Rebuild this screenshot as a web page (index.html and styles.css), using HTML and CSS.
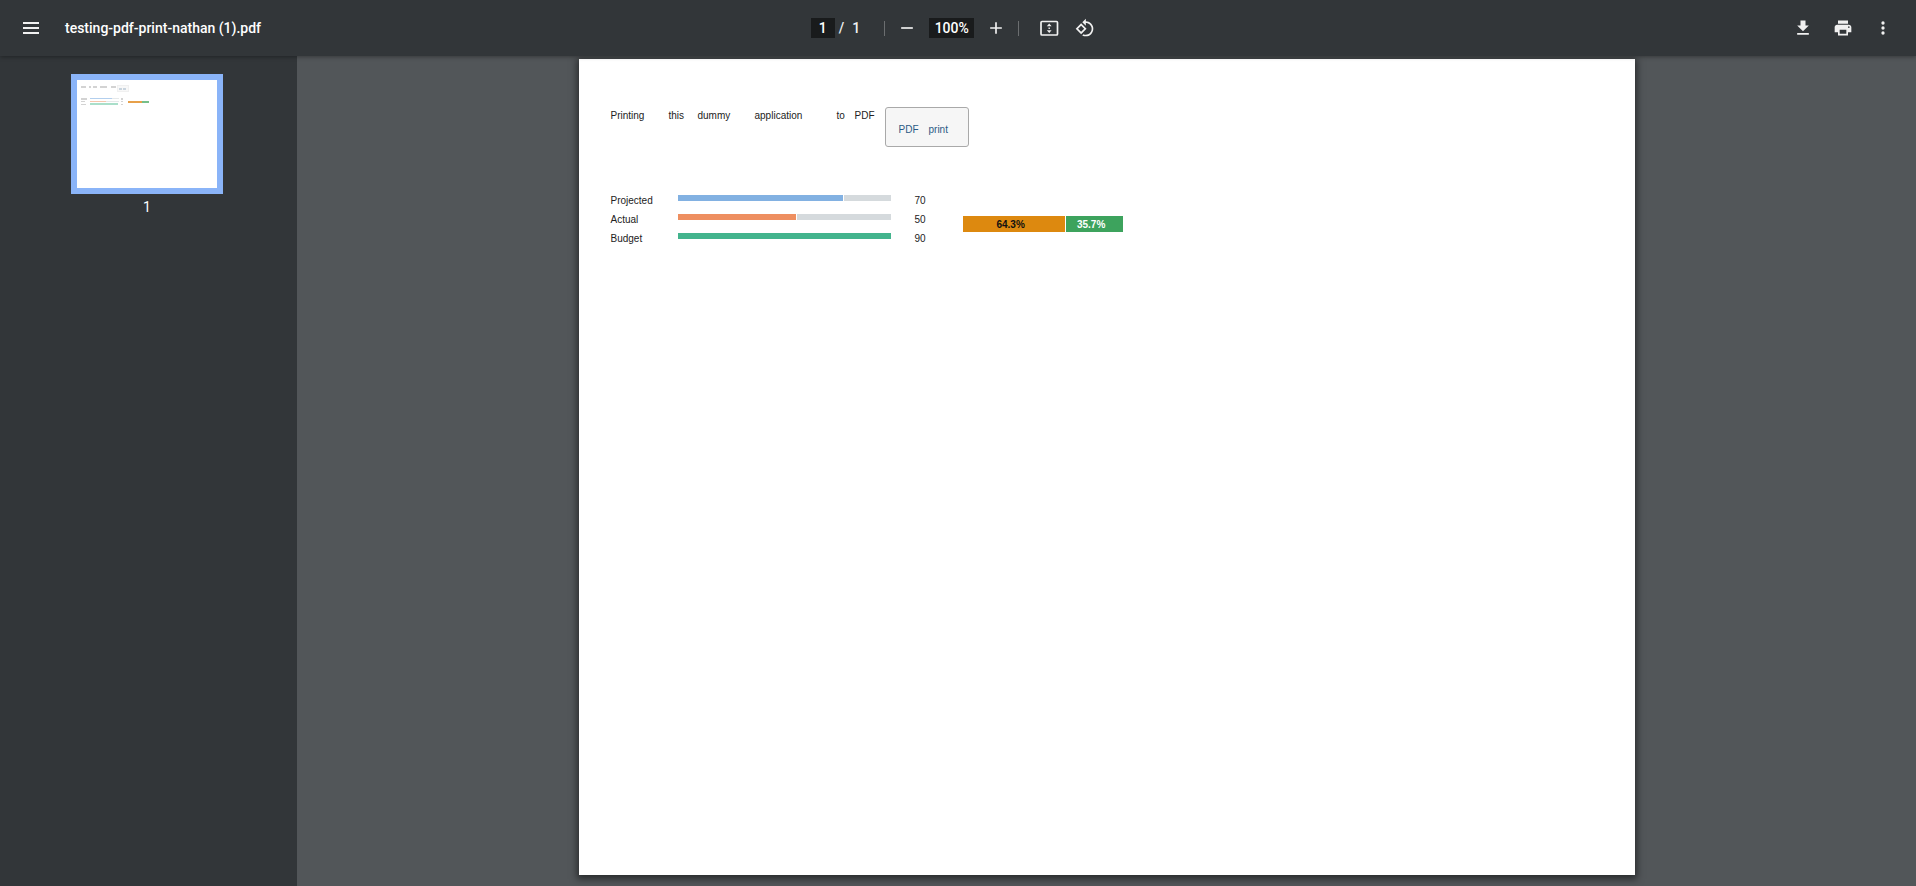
FILE: index.html
```html
<!DOCTYPE html>
<html lang="en">
<head>
<meta charset="utf-8">
<title>testing-pdf-print-nathan (1).pdf</title>
<link rel="stylesheet" href="styles.css">
</head>
<body>
<header class="toolbar">
  <div class="toolbar-start">
    <button class="icon-button" aria-label="Menu"><svg viewBox="0 0 24 24"><path d="M4 6h16v2H4zM4 11h16v2H4zM4 16h16v2H4z"/></svg></button>
    <h1 class="title">testing-pdf-print-nathan (1).pdf</h1>
  </div>
  <div class="toolbar-center">
    <input class="field page-field" aria-label="Page number" value="1">
    <span class="page-total"><span>/</span><span>1</span></span>
    <span class="divider"></span>
    <button class="icon-button zoom-out" aria-label="Zoom out"><svg viewBox="0 0 24 24"><path d="M5 11h14v2H5z"/></svg></button>
    <input class="field zoom-field" aria-label="Zoom level" value="100%">
    <button class="icon-button zoom-in" aria-label="Zoom in"><svg viewBox="0 0 24 24"><path d="M19 13h-6v6h-2v-6H5v-2h6V5h2v6h6v2z"/></svg></button>
    <span class="divider"></span>
    <button class="icon-button fit" aria-label="Fit to page"><svg viewBox="0 0 24 24"><rect x="4" y="5.500" width="16.500" height="13.500" rx="1" fill="none" stroke="currentColor" stroke-width="1.700"/><path d="M12.200 7.400l2.400 2.800H9.800zM12.200 17l2.400-2.800H9.800zM11.500 11.500h1.400v1.400h-1.400z"/></svg></button>
    <button class="icon-button" aria-label="Rotate counterclockwise"><svg viewBox="0 0 24 24"><path d="M7.340 6.410L.86 12.900l6.490 6.480 6.490-6.480-6.500-6.490zM3.690 12.900l3.660-3.660L11 12.900l-3.660 3.660-3.650-3.660zm15.670-6.260C17.610 4.880 15.300 4 13 4V.76L8.760 5 13 9.240V6c1.790 0 3.580.68 4.950 2.050 2.730 2.730 2.730 7.170 0 9.900C16.580 19.320 14.790 20 13 20c-.97 0-1.940-.21-2.840-.61l-1.490 1.490C10.020 21.620 11.510 22 13 22c2.300 0 4.610-.88 6.360-2.640 3.520-3.510 3.520-9.210 0-12.720z"/></svg></button>
  </div>
  <div class="toolbar-end">
    <button class="icon-button" aria-label="Download"><svg viewBox="0 0 24 24"><path d="M19 9h-4V3H9v6H5l7 7 7-7zM5 18v2h14v-2H5z"/></svg></button>
    <button class="icon-button" aria-label="Print"><svg viewBox="0 0 24 24"><path d="M19 8H5c-1.660 0-3 1.340-3 3v6h4v4h12v-4h4v-6c0-1.660-1.340-3-3-3zm-3 11H8v-5h8v5zm3-7c-.55 0-1-.45-1-1s.45-1 1-1 1 .45 1 1-.45 1-1 1zm-1-9H6v4h12V3z"/></svg></button>
    <button class="icon-button" aria-label="More actions"><svg viewBox="0 0 24 24"><circle cx="12" cy="6" r="2"/><circle cx="12" cy="12" r="2"/><circle cx="12" cy="18" r="2"/></svg></button>
  </div>
</header>
<div class="viewer">
  <nav class="sidebar" aria-label="Pages">
    <button class="thumbnail" aria-label="Page 1">
      <svg viewBox="0 0 140 108">
        <g fill="#d3d3d3"><path d="M4 6h5v2H4zM12 6h2v2h-2zM16 6h4v2h-4zM23 6h7v2h-7zM34 6h2v2h-2zM36 6h3v2h-3zM4 18h6v2H4zM4 21h4v1H4zM4 24h5v1H4zM44 18h2v2h-2zM44 21h2v1h-2zM44 24h2v1h-2z"/></g>
        <rect x="40.500" y="5.500" width="11" height="6" fill="#f8f8f8" stroke="#f0f0f0"/>
        <path fill="#c9d4de" d="M42 8h3v2h-3zM46 8h3v2h-3z"/>
        <path fill="#e6e9ea" d="M13 18h29v1H13zM13 21h29v1H13z"/>
        <path fill="#b3cfee" d="M13 18h22v1H13z"/>
        <path fill="#f6c6ae" d="M13 21h16v1H13z"/>
        <path fill="#aadfca" d="M13 23h28v2H13z"/>
        <path fill="#e7a04a" d="M51 21h14v2H51z"/>
        <path fill="#76bf89" d="M65 21h7v2h-7z"/>
      </svg>
    </button>
    <span class="thumbnail-label">1</span>
  </nav>
  <main class="canvas">
    <article class="page">
      <div class="intro">
        <span>Printing</span><span>this</span><span>dummy</span><span>application</span><span>to</span><span>PDF</span>
        <button class="print-button"><span>PDF</span><span>print</span></button>
      </div>
      <div class="charts">
        <table class="bars">
          <tr><th scope="row">Projected</th><td class="bar-cell"><div class="track"><div class="fill projected" style="width:78%"></div></div></td><td>70</td></tr>
          <tr><th scope="row">Actual</th><td class="bar-cell"><div class="track"><div class="fill actual" style="width:56%"></div></div></td><td>50</td></tr>
          <tr><th scope="row">Budget</th><td class="bar-cell"><div class="track"><div class="fill budget" style="width:100%"></div></div></td><td>90</td></tr>
        </table>
        <div class="stack">
          <div class="segment orange" style="width:64.3%">64.3%</div>
          <div class="segment green" style="width:35.7%">35.7%</div>
        </div>
      </div>
    </article>
  </main>
</div>
</body>
</html>
```
FILE: styles.css
```css
* { box-sizing: border-box; }

body {
  margin: 0;
  height: 100vh;
  display: flex;
  flex-direction: column;
  overflow: hidden;
  background: #525659;
  font-family: Roboto, "Liberation Sans", sans-serif;
}

button {
  border: 0;
  padding: 0;
  background: none;
  color: inherit;
  font: inherit;
}

.toolbar {
  position: relative;
  z-index: 1;
  flex: none;
  height: 56px;
  padding: 0 18px;
  display: grid;
  grid-template-columns: 1fr auto 1fr;
  align-items: center;
  background: #323639;
  color: #f1f1f1;
  box-shadow: 0 1px 4px rgba(0, 0, 0, 0.35);
  font-size: 14px;
  font-weight: 500;
}

.toolbar-start,
.toolbar-center,
.toolbar-end {
  display: flex;
  align-items: center;
}

.toolbar-center { padding-right: 8px; }

.toolbar-end {
  justify-content: flex-end;
  gap: 16px;
  padding-right: 3px;
}

.icon-button {
  width: 24px;
  height: 24px;
  flex: none;
}

.toolbar-start .icon-button { margin-left: 1px; }

.icon-button svg {
  display: block;
  width: 24px;
  height: 24px;
  fill: currentColor;
}

.toolbar-center .icon-button svg,
.toolbar-end .icon-button svg {
  width: 20px;
  height: 20px;
  margin: 2px;
}

.title {
  margin: 0 0 0 22px;
  font-size: 14px;
  font-weight: 500;
  color: #fff;
}

.field {
  height: 20px;
  border: 0;
  padding: 0;
  background: #191b1c;
  color: #fff;
  font: inherit;
  text-align: center;
}

.page-field { width: 24px; }
.zoom-field { width: 45px; }

.page-total {
  display: flex;
  gap: 8px;
  margin: 0 24px 0 4px;
}

.divider {
  width: 1px;
  height: 15px;
  background: #6b6e70;
}

.zoom-out { margin: 0 10px; }
.zoom-in { margin: 0 10px; }
.fit { margin: 0 12px 0 18px; }

.toolbar-center .fit svg {
  width: 24px;
  height: 24px;
  margin: 0;
}

.viewer {
  flex: 1;
  min-height: 0;
  display: flex;
}

.sidebar {
  flex: none;
  width: 297px;
  padding: 18px 0 0 71px;
  background: #323639;
  color: #fff;
}

.thumbnail {
  display: block;
  border: 6px solid #8ab4f8;
  background: #fff;
}

.thumbnail svg {
  display: block;
  width: 140px;
}

.thumbnail-label {
  display: block;
  width: 152px;
  padding-top: 4px;
  font-size: 14px;
  line-height: 18px;
  text-align: center;
}

.canvas {
  flex: 1;
  min-width: 0;
  padding: 3px 16px 11px;
  display: flex;
  justify-content: center;
}

.page {
  width: 100%;
  max-width: 1056px;
  padding: 48px 32px;
  background: #fff;
  box-shadow: 0 2px 7px 2px rgba(0, 0, 0, 0.5);
  color: #222;
  font-family: "Liberation Sans", Arial, sans-serif;
  font-size: 10px;
}

.intro {
  display: grid;
  grid-template-columns: 58px 29px 57px 82px 18px 30px 84px;
  line-height: 18px;
}

.print-button {
  height: 40px;
  padding: 6px 13px 0;
  display: flex;
  align-items: center;
  gap: 10px;
  border: 1px solid #a9a9a9;
  border-radius: 3px;
  background: #f6f6f6;
  color: #2b5a85;
}

.charts {
  display: flex;
  align-items: center;
  gap: 32px;
  margin-top: 44px;
}

.bars {
  border-collapse: collapse;
  table-layout: fixed;
  width: 320px;
}

.bars th,
.bars td {
  height: 19px;
  padding: 0;
  font-weight: 400;
  text-align: left;
}

.bars th { width: 67px; }

.bars td:last-child { width: 16px; }

.bars .bar-cell {
  padding: 4px 24px 0 0;
  vertical-align: top;
}

.track {
  height: 6px;
  background: #d5dadd;
}

.fill {
  height: 6px;
  border-right: 1px solid #fff;
}

.projected { background: #82b1e2; }
.actual { background: #ee8f60; }
.budget { background: #43b48d; border: 0; }

.stack {
  width: 160px;
  height: 16px;
  margin-top: 8px;
  display: flex;
  gap: 1px;
}

.segment {
  padding: 1px 6px 0 0;
  line-height: 16px;
  text-align: center;
  font-weight: 700;
}

.orange {
  background: #dd890f;
  color: #111;
}

.green {
  background: #3da35d;
  color: #fff;
}
```
